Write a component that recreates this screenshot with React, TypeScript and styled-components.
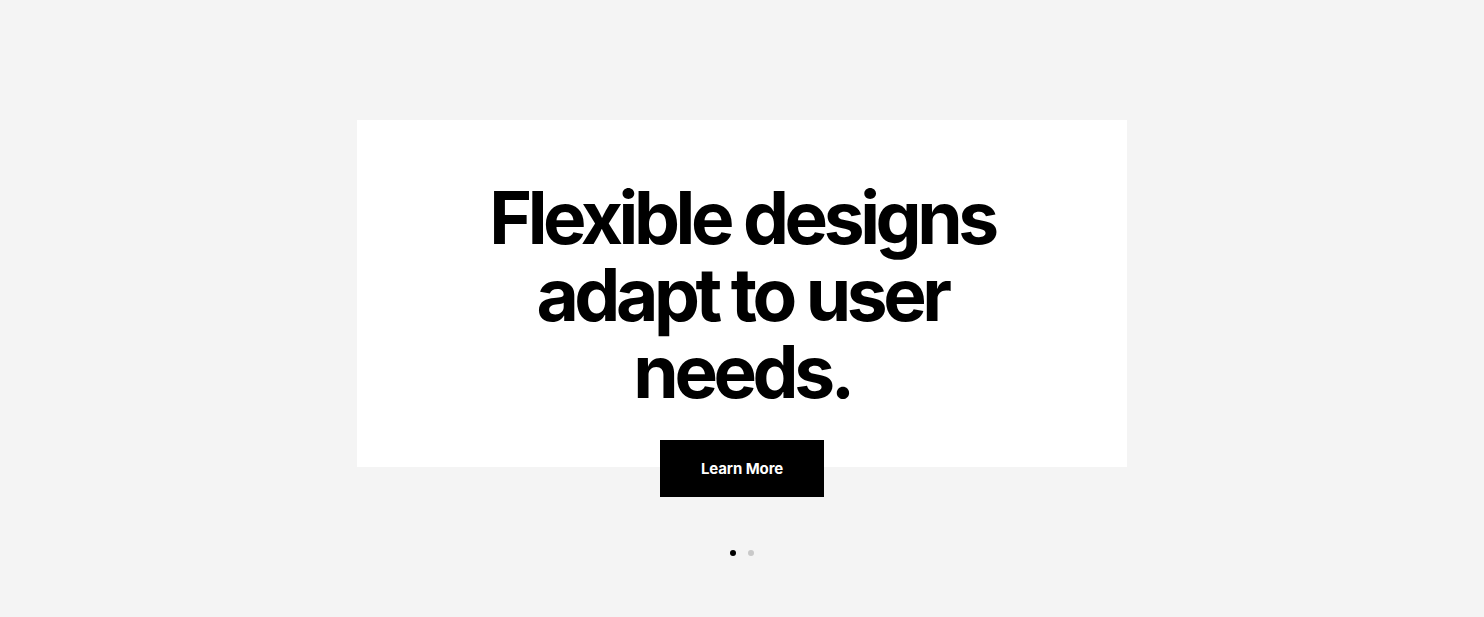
import React from "react";
import styled, { createGlobalStyle } from "styled-components";

const Global = createGlobalStyle`
  html, body { margin: 0; padding: 0; background: #f4f4f4; }
  body { font-family: Inter, "Noto Sans", sans-serif; }
`;

const Page = styled.main`
  width: 1484px;
  height: 617px;
  display: flex;
  flex-direction: column;
  align-items: center;
  padding-top: 120px;
  box-sizing: border-box;
`;

const Card = styled.section`
  width: 770px;
  height: 347px;
  background: #ffffff;
  display: flex;
  flex-direction: column;
  align-items: center;
  box-sizing: border-box;
  padding-top: 59px;
`;

const Headline = styled.h1`
  margin: 0;
  font-family: Inter, sans-serif;
  font-weight: 700;
  font-size: 73px;
  line-height: 77px;
  letter-spacing: -4.4px;
  color: #000;
  text-align: center;
`;

const Line = styled.span`
  display: block;
  height: 77px;
`;

const Button = styled.button`
  margin-top: auto;
  margin-bottom: -30px;
  width: 164px;
  height: 57px;
  background: #000;
  color: #fff;
  border: none;
  font-family: Inter, sans-serif;
  font-weight: 700;
  font-size: 15px;
  letter-spacing: -0.1px;
  cursor: pointer;
`;

const Dots = styled.div`
  display: flex;
  gap: 12px;
  margin-top: 83px;
`;

const Dot = styled.span<{ $active?: boolean }>`
  width: 6px;
  height: 6px;
  border-radius: 50%;
  background: ${(p) => (p.$active ? "#000" : "#c9c9c9")};
`;

export default function App() {
  return (
    <>
      <Global />
      <Page>
        <Card>
          <Headline>
            <Line>Flexible designs</Line>
            <Line>adapt to user</Line>
            <Line>needs.</Line>
          </Headline>
          <Button>Learn More</Button>
        </Card>
        <Dots>
          <Dot $active />
          <Dot />
        </Dots>
      </Page>
    </>
  );
}
